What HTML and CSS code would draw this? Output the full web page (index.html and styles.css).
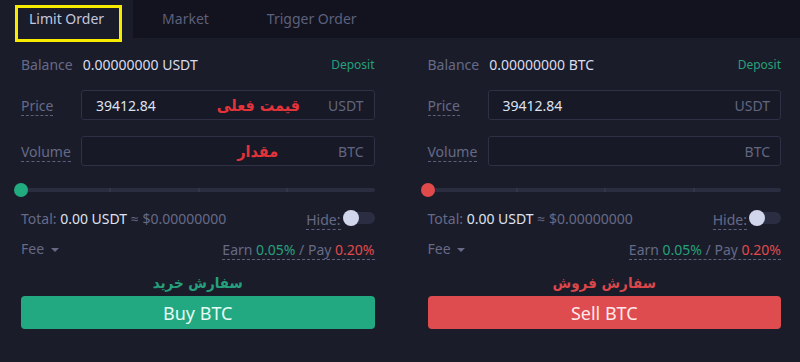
FILE: index.html
```html
<!DOCTYPE html>
<html lang="en">
<head>
    <meta charset="UTF-8">
    <meta name="viewport" content="width=device-width, initial-scale=1.0">
    <title>Limit Order</title>
    <link rel="stylesheet" href="styles.css">
</head>
<body>
    <div class="tabs">
        <div class="tab active">Limit Order<span class="highlight"></span></div>
        <div class="tab">Market</div>
        <div class="tab">Trigger Order</div>
    </div>

    <div class="trade">
        <!-- Buy side -->
        <div class="panel">
            <div class="balance-row">
                <span class="muted">Balance</span>
                <span class="balance-value">0.00000000 USDT</span>
                <span class="deposit">Deposit</span>
            </div>

            <div class="field-row">
                <div class="field-label"><span class="dashed">Price</span></div>
                <div class="field-box">
                    <span class="field-value">39412.84</span>
                    <span class="note-fa">قیمت فعلی</span>
                    <span class="unit">USDT</span>
                </div>
            </div>

            <div class="field-row">
                <div class="field-label"><span class="dashed">Volume</span></div>
                <div class="field-box">
                    <span class="field-value"></span>
                    <span class="note-fa note-wide">مقدار</span>
                    <span class="unit">BTC</span>
                </div>
            </div>

            <div class="slider">
                <div class="track">
                    <i class="tick" style="left: 25%"></i>
                    <i class="tick" style="left: 50%"></i>
                    <i class="tick" style="left: 75%"></i>
                </div>
                <span class="thumb buy"></span>
            </div>

            <div class="total-row">
                <span class="muted">Total: <b class="strong">0.00 USDT</b> ≈ $0.00000000</span>
                <span class="hide">
                    <span class="dashed">Hide:</span>
                    <span class="toggle"><span class="knob"></span></span>
                </span>
            </div>

            <div class="fee-row">
                <span class="muted">Fee <span class="caret"></span></span>
                <span class="dashed">Earn <span class="green">0.05%</span> / Pay <span class="red">0.20%</span></span>
            </div>

            <div class="action-fa green">سفارش خرید</div>
            <button class="action-btn buy-btn">Buy BTC</button>
        </div>

        <!-- Sell side -->
        <div class="panel">
            <div class="balance-row">
                <span class="muted">Balance</span>
                <span class="balance-value">0.00000000 BTC</span>
                <span class="deposit">Deposit</span>
            </div>

            <div class="field-row">
                <div class="field-label"><span class="dashed">Price</span></div>
                <div class="field-box">
                    <span class="field-value">39412.84</span>
                    <span class="unit">USDT</span>
                </div>
            </div>

            <div class="field-row">
                <div class="field-label"><span class="dashed">Volume</span></div>
                <div class="field-box">
                    <span class="field-value"></span>
                    <span class="unit">BTC</span>
                </div>
            </div>

            <div class="slider">
                <div class="track">
                    <i class="tick" style="left: 25%"></i>
                    <i class="tick" style="left: 50%"></i>
                    <i class="tick" style="left: 75%"></i>
                </div>
                <span class="thumb sell"></span>
            </div>

            <div class="total-row">
                <span class="muted">Total: <b class="strong">0.00 USDT</b> ≈ $0.00000000</span>
                <span class="hide">
                    <span class="dashed">Hide:</span>
                    <span class="toggle"><span class="knob"></span></span>
                </span>
            </div>

            <div class="fee-row">
                <span class="muted">Fee <span class="caret"></span></span>
                <span class="dashed">Earn <span class="green">0.05%</span> / Pay <span class="red">0.20%</span></span>
            </div>

            <div class="action-fa red">سفارش فروش</div>
            <button class="action-btn sell-btn">Sell BTC</button>
        </div>
    </div>
</body>
</html>
```

FILE: styles.css
```css
* {
    box-sizing: border-box;
    margin: 0;
    padding: 0;
}

body {
    font-family: "Noto Sans", "Open Sans", sans-serif;
    font-size: 14px;
    background-color: #1a1c2a;
    color: #666a86;
    width: 800px;
    height: 362px;
    overflow: hidden;
}

.tabs {
    display: flex;
    height: 38px;
    background-color: #12131e;
}

.tab {
    position: relative;
    padding: 0 29px;
    line-height: 38px;
    font-size: 14px;
    color: #5c607c;
}

.tab.active {
    background-color: #1a1c2a;
    color: #c3c7dd;
}

/* yellow annotation box */
.highlight {
    position: absolute;
    left: 15px;
    top: 5px;
    width: 107px;
    height: 37px;
    border: 3px solid #f7ec00;
    z-index: 2;
}

.trade {
    display: flex;
    gap: 53px;
    padding: 0 19px 0 21px;
}

.panel {
    flex: 1;
    padding-top: 16px;
}

.muted {
    color: #666a86;
}

.balance-row {
    display: flex;
    align-items: center;
    height: 20px;
}

.balance-value {
    margin-left: 10px;
    color: #dadded;
}

.deposit {
    margin-left: auto;
    font-size: 12px;
    color: #26a07c;
}

.field-row {
    display: flex;
    align-items: center;
    margin-top: 16px;
}

.field-label {
    width: 60px;
    flex-shrink: 0;
    padding-top: 2px;
}

.dashed {
    display: inline-block;
    color: #666a86;
    line-height: 19px;
    border-bottom: 1px dashed #5c607c;
}

.field-box {
    display: flex;
    align-items: center;
    flex: 1;
    height: 30px;
    padding: 0 10px 0 14px;
    border: 1px solid #2e3145;
    border-radius: 3px;
    background-color: #171927;
}

.field-value {
    flex: 1;
    font-size: 14px;
    color: #dfe2f0;
}

.unit {
    color: #62667f;
}

.note-fa {
    margin-right: 28px;
    font-family: "DejaVu Sans Condensed", "DejaVu Sans", sans-serif;
    font-weight: bold;
    font-size: 16px;
    color: #e3333a;
    direction: rtl;
}

.note-fa.note-wide {
    margin-right: 60px;
}

.slider {
    position: relative;
    height: 14px;
    margin-top: 17px;
}

.track {
    position: absolute;
    left: 0;
    right: 0;
    top: 5px;
    height: 4px;
    border-radius: 2px;
    background-color: #2a2d40;
}

.tick {
    position: absolute;
    top: 0;
    width: 2px;
    height: 4px;
    background-color: #33364b;
}

.thumb {
    position: absolute;
    left: -7px;
    top: 0;
    width: 14px;
    height: 14px;
    border-radius: 50%;
}

.thumb.buy {
    background-color: #23ab80;
}

.thumb.sell {
    background-color: #e04a4b;
}

.total-row,
.fee-row {
    display: flex;
    align-items: center;
    justify-content: space-between;
    height: 20px;
}

.total-row {
    margin-top: 11px;
}

.fee-row {
    margin-top: 10px;
}

.strong {
    font-weight: normal;
    color: #dfe2f0;
}

.hide {
    display: flex;
    align-items: center;
}

.hide .dashed {
    margin-top: 3px;
}

.toggle {
    position: relative;
    width: 32px;
    height: 12px;
    margin-left: 2px;
    border-radius: 6px;
    background-color: #2b2e42;
}

.knob {
    position: absolute;
    left: 0;
    top: -2px;
    width: 16px;
    height: 16px;
    border-radius: 50%;
    background-color: #d2d6ec;
}

.fee-row .dashed {
    margin-top: 3px;
}

.caret {
    display: inline-block;
    margin-left: 3px;
    vertical-align: middle;
    border-left: 4px solid transparent;
    border-right: 4px solid transparent;
    border-top: 4px solid #666a86;
}

.green {
    color: #26a07c;
}

.red {
    color: #e04a4b;
}

.action-fa {
    margin-top: 15px;
    height: 20px;
    line-height: 20px;
    text-align: center;
    font-family: "DejaVu Sans Condensed", "DejaVu Sans", sans-serif;
    font-weight: bold;
    font-size: 15px;
    direction: rtl;
}

.action-fa.red {
    color: #d9474a;
}

.action-btn {
    display: block;
    width: 100%;
    height: 33px;
    margin-top: 3px;
    border: none;
    border-radius: 4px;
    font-family: "Noto Sans", "Open Sans", sans-serif;
    font-size: 18px;
    cursor: pointer;
}

.buy-btn {
    background-color: #23a982;
    color: #e6fbf3;
}

.sell-btn {
    background-color: #df4c4f;
    color: #ffe9ea;
}
```
